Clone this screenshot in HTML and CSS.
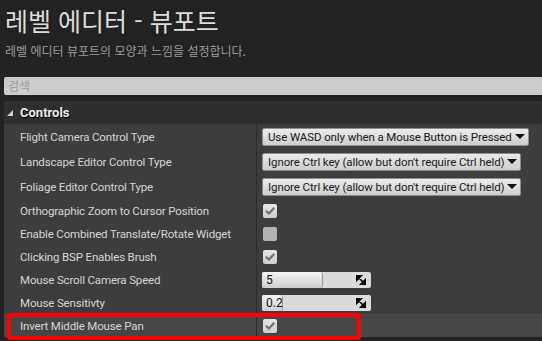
FILE: index.html
```html
<!DOCTYPE html>
<html lang="ko">
<head>
    <meta charset="UTF-8">
    <title>레벨 에디터 - 뷰포트</title>
    <link rel="stylesheet" href="styles.css">
</head>
<body>
    <div class="page-head">
        <h1 class="title">레벨 에디터 - 뷰포트</h1>
        <p class="subtitle">레벨 에디터 뷰포트의 모양과 느낌을 설정합니다.</p>
    </div>

    <div class="search">검색</div>

    <div class="category">
        <div class="category-head">
            <span class="arrow"></span>
            Controls
        </div>

        <div class="row tall">
            <div class="name">Flight Camera Control Type</div>
            <div class="value"><span class="combo">Use WASD only when a Mouse Button is Pressed<span class="caret"></span></span></div>
        </div>
        <div class="row tall">
            <div class="name">Landscape Editor Control Type</div>
            <div class="value"><span class="combo">Ignore Ctrl key (allow but don't require Ctrl held)<span class="caret"></span></span></div>
        </div>
        <div class="row tall">
            <div class="name">Foliage Editor Control Type</div>
            <div class="value"><span class="combo">Ignore Ctrl key (allow but don't require Ctrl held)<span class="caret"></span></span></div>
        </div>
        <div class="row">
            <div class="name">Orthographic Zoom to Cursor Position</div>
            <div class="value"><span class="check on"><svg viewBox="0 0 14 14"><path d="M3.5 7.3 L6 9.6 L10.6 4.4" /></svg></span></div>
        </div>
        <div class="row">
            <div class="name">Enable Combined Translate/Rotate Widget</div>
            <div class="value"><span class="check"></span></div>
        </div>
        <div class="row">
            <div class="name">Clicking BSP Enables Brush</div>
            <div class="value"><span class="check on"><svg viewBox="0 0 14 14"><path d="M3.5 7.3 L6 9.6 L10.6 4.4" /></svg></span></div>
        </div>
        <div class="row">
            <div class="name">Mouse Scroll Camera Speed</div>
            <div class="value">
                <span class="spin">
                    <span class="fill" style="width: 61px"></span>
                    <span class="num">5</span>
                    <svg class="grip" viewBox="0 0 10 10"><path d="M0 0H6L0 6Z M10 10H4L10 4Z M1.5 1.5L8.5 8.5" /></svg>
                </span>
            </div>
        </div>
        <div class="row">
            <div class="name">Mouse Sensitivty</div>
            <div class="value">
                <span class="spin">
                    <span class="fill" style="width: 21px"></span>
                    <span class="num">0.2</span>
                    <svg class="grip" viewBox="0 0 10 10"><path d="M0 0H6L0 6Z M10 10H4L10 4Z M1.5 1.5L8.5 8.5" /></svg>
                </span>
            </div>
        </div>
        <div class="row hover">
            <div class="name">Invert Middle Mouse Pan</div>
            <div class="value"><span class="check on"><svg viewBox="0 0 14 14"><path d="M3.5 7.3 L6 9.6 L10.6 4.4" /></svg></span></div>
        </div>
    </div>

    <!-- highlight annotation -->
    <div class="mark"></div>
</body>
</html>
```

FILE: styles.css
```css
* {
    margin: 0;
    padding: 0;
    box-sizing: border-box;
}

body {
    position: relative;
    width: 542px;
    height: 341px;
    overflow: hidden;
    background: #222222;
    font-family: Roboto, "Noto Sans CJK KR", sans-serif;
}

.page-head {
    padding: 4px 5px 0;
    height: 77px;
}

.title {
    font-family: "Noto Sans CJK KR", sans-serif;
    font-weight: 400;
    font-size: 25px;
    line-height: 32px;
    color: #dcdcdc;
}

.subtitle {
    margin-top: 7px;
    font-family: "Noto Sans CJK KR", sans-serif;
    font-size: 12px;
    line-height: 16px;
    color: #9a9a9a;
}

.search {
    margin-left: 4px;
    height: 18px;
    padding-left: 4px;
    background: #cccccc;
    border-radius: 2px 0 0 2px;
    font-family: "Noto Sans CJK KR", sans-serif;
    font-size: 12px;
    line-height: 18px;
    color: #9c9c9c;
}

.category {
    margin-top: 6px;
    margin-left: 4px;
}

.category-head {
    display: flex;
    align-items: center;
    gap: 7px;
    height: 23px;
    padding-left: 3px;
    background: #2f2f2f;
    font-size: 13px;
    font-weight: 700;
    color: #ececec;
    text-shadow: 1px 1px 1px #000;
}

.arrow {
    width: 0;
    height: 0;
    border-left: 6px solid transparent;
    border-bottom: 6px solid #cfcfcf;
}

.row {
    display: grid;
    grid-template-columns: 252px 1fr;
    height: 23px;
    background: #3d3d3d;
}

.row.tall {
    height: 25px;
}

.row.hover {
    background: #474747;
}

.name {
    display: flex;
    align-items: center;
    padding-left: 16px;
    font-size: 11.5px;
    letter-spacing: -0.15px;
    color: #d4d4d4;
}

.value {
    display: flex;
    align-items: center;
    padding-left: 5px;
    border-left: 1px solid #2c2c2c;
}

.combo {
    display: inline-flex;
    align-items: center;
    height: 18px;
    padding: 0 3px 0 5px;
    background: linear-gradient(#ebebeb, #cdcdcd);
    border: 1px solid #8d8d8d;
    border-radius: 2px;
    font-size: 11.5px;
    letter-spacing: -0.1px;
    color: #1a1a1a;
    white-space: nowrap;
}

.caret {
    margin-left: 3px;
    width: 0;
    height: 0;
    border-left: 5px solid transparent;
    border-right: 5px solid transparent;
    border-top: 5px solid #111;
}

.check {
    display: block;
    width: 14px;
    height: 14px;
    margin-left: 1px;
    background: #b3b3b3;
    border-radius: 2px;
}

.check.on {
    background: linear-gradient(#e6e6e6, #cfcfcf);
}

.check svg {
    display: block;
    width: 14px;
    height: 14px;
}

.check path {
    fill: none;
    stroke: #737373;
    stroke-width: 2.2;
    stroke-linecap: round;
    stroke-linejoin: round;
}

.spin {
    position: relative;
    display: flex;
    align-items: center;
    width: 109px;
    height: 16px;
    background: #dadada;
    border-radius: 2px;
    overflow: hidden;
}

.fill {
    position: absolute;
    left: 0;
    top: 0;
    bottom: 0;
    background: linear-gradient(#f4f4f4, #cfcfcf);
    border-right: 1px solid #9a9a9a;
    border-radius: 0 3px 3px 0;
}

.num {
    position: relative;
    padding-left: 4px;
    font-size: 12px;
    color: #111;
}

.grip {
    position: absolute;
    right: 5px;
    top: 3px;
    width: 10px;
    height: 10px;
}

.grip path {
    fill: #000;
    stroke: #000;
    stroke-width: 1.6;
}

.mark {
    position: absolute;
    left: 7px;
    top: 313px;
    width: 354px;
    height: 27px;
    border: 4px solid #ff0000;
    border-radius: 3px;
}
```
